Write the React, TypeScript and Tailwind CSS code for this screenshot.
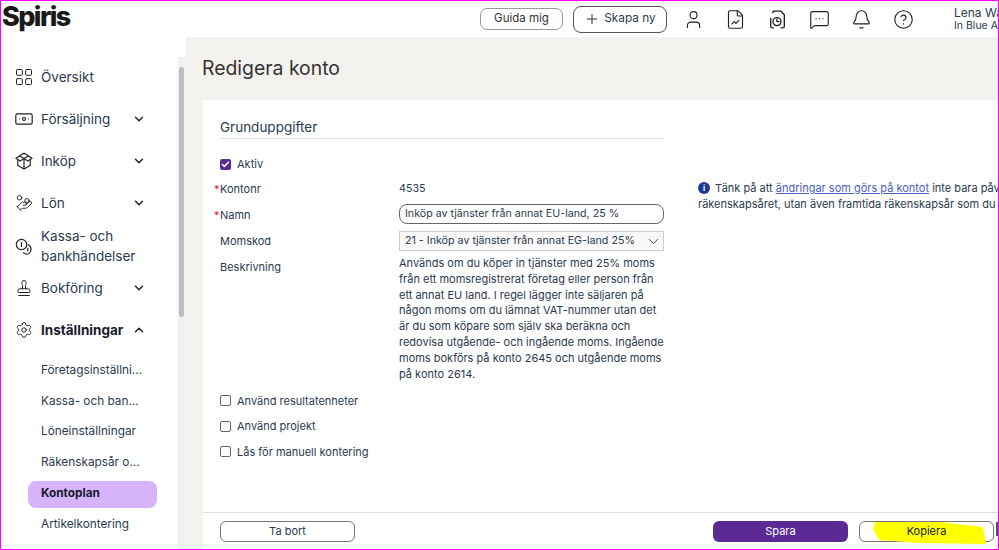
import { Bell, ChevronDown, ChevronUp, CircleHelp, FileChartLine, HandCoins, LayoutGrid, MessageSquareMore, Plus, Settings, Stamp, User, Check } from 'lucide-react';
import type { ReactNode } from 'react';

function ClockFile() {
  return (
    <svg width="21" height="21" viewBox="0 0 20 20" fill="none" stroke="#222" strokeWidth="1.3" strokeLinecap="round" strokeLinejoin="round">
      <path d="M7 2h6l3.5 3.5v11a1.5 1.5 0 0 1-1.5 1.5h-1.5" />
      <path d="M7 2A1.5 1.5 0 0 0 5.5 3.5M3.5 9v7.5A1.5 1.5 0 0 0 5 18h1" />
      <circle cx="9.5" cy="12" r="3.8" />
      <path d="M9.5 9.8V12h2" />
    </svg>
  );
}

function Banknote() {
  return (
    <svg width="18" height="18" viewBox="0 0 18 18" fill="none" stroke="#222" strokeWidth="1.2" strokeLinecap="round">
      <rect x="0.8" y="3.8" width="16.4" height="10.4" rx="1.6" />
      <circle cx="9" cy="9" r="1.5" />
      <path d="M4.5 9h.01M13.5 9h.01" />
    </svg>
  );
}

function OpenBox() {
  return (
    <svg width="18" height="18" viewBox="0 0 18 18" fill="none" stroke="#222" strokeWidth="1.2" strokeLinecap="round" strokeLinejoin="round">
      <path d="M9 6.5 4.5 4 8.5 1.3 9 1.8l.5-.5 4 2.7L9 6.5Z" />
      <path d="M4.5 4 1 6.3l4.2 2.6L9 6.5l3.8 2.4L17 6.3 13.5 4" />
      <path d="M2.8 7.5v6L9 17l6.2-3.5v-6" />
      <path d="M9 6.5V17" />
    </svg>
  );
}

function Coins() {
  return (
    <svg width="18" height="18" viewBox="0 0 18 18" fill="none" stroke="#222" strokeWidth="1.2" strokeLinecap="round">
      <circle cx="6.5" cy="7.5" r="5.2" />
      <path d="M6.5 5.5v4" />
      <path d="M13 7.8a5 5 0 0 1 .5 9 5 5 0 0 1-5-1" />
      <path d="M12.8 11v3" />
    </svg>
  );
}

function NavItem({ icon, label, bold, open }: { icon: ReactNode; label: ReactNode; bold?: boolean; open?: boolean | null }) {
  return (
    <div className="flex items-center h-[42px]">
      <div className="w-[26px] flex justify-start shrink-0">{icon}</div>
      <div className={`w-[91px] text-[13.5px] leading-[20px] ${bold ? 'font-bold text-[#1a1a2e]' : 'text-[#2c3a4d]'}`}>{label}</div>
      {open === false && <ChevronDown size={14} strokeWidth={2.5} color="#222" />}
      {open === true && <ChevronUp size={14} strokeWidth={2.5} color="#222" />}
    </div>
  );
}

function SubItem({ label, active }: { label: string; active?: boolean }) {
  return (
    <div className={`h-[27px] mb-[3.9px] w-[129px] px-[13px] flex items-center text-[11.8px] whitespace-nowrap rounded-lg ${active ? 'bg-[#d6b4fc] font-bold text-[#1a1a2e]' : 'text-[#2c3a4d]'}`}>
      {label}
    </div>
  );
}

function Row({ label, required, children, h }: { label: string; required?: boolean; children: ReactNode; h: string }) {
  return (
    <div className={`flex items-start ${h}`}>
      <div className="w-[179px] relative text-[11px] leading-[16px] text-[#2c3a4d]">
        {required && <span className="absolute -left-[6px] text-[#d0213b]">*</span>}
        {label}
      </div>
      <div className="flex-1 text-[10.7px] leading-[16px] text-[#2c3a4d]">{children}</div>
    </div>
  );
}

function Box({ label }: { label: string }) {
  return (
    <div className="flex items-center h-[25.5px] gap-[6px] text-[11px] text-[#2c3a4d]">
      <span className="w-[11px] h-[11px] rounded-[2px] border border-[#666] bg-white" />
      {label}
    </div>
  );
}

export default function App() {
  return (
    <div className="w-[999px] h-[550px] overflow-hidden border border-[#f0f] bg-white flex flex-col font-['Inter',sans-serif] text-[#2c3a4d]">
      <header className="h-[36px] shrink-0 flex items-center pl-[1px] overflow-hidden">
        <span className="w-[478px] shrink-0 text-[27px] font-extrabold tracking-[-1.6px] text-[#1a1a1a] leading-none -mt-[5px]">Spiris</span>
        <div className="flex items-center shrink-0">
          <button className="w-[83px] h-[22px] rounded-[7px] border border-[#999] text-[11.5px] text-[#333]">Guida mig</button>
          <button className="ml-[10px] w-[94px] h-[27px] rounded-lg border border-[#555] text-[11.8px] text-[#2c3a4d] flex items-center justify-center gap-[4px]"><Plus size={16} strokeWidth={1.5} color="#333" />Skapa ny</button>
          <div className="ml-[16px] flex items-center gap-[21px]">
            <User size={21} strokeWidth={1.3} color="#222" />
            <FileChartLine size={21} strokeWidth={1.3} color="#222" />
            <ClockFile />
            <MessageSquareMore size={21} strokeWidth={1.3} color="#222" />
            <Bell size={21} strokeWidth={1.3} color="#222" />
            <CircleHelp size={21} strokeWidth={1.3} color="#222" />
          </div>
          <div className="ml-[40px] whitespace-nowrap">
            <div className="text-[12px] leading-[14px]">Lena Wallin</div>
            <div className="text-[10.5px] leading-[12px]">In Blue AB</div>
          </div>
        </div>
      </header>
      <div className="flex flex-1 min-h-0">
        <aside className="w-[177px] shrink-0 pl-[14px] pt-[19px]">
          <NavItem icon={<LayoutGrid size={20} strokeWidth={1.2} color="#222" className="-ml-[1px]" />} label="Översikt" />
          <NavItem icon={<Banknote />} label="Försäljning" open={false} />
          <NavItem icon={<OpenBox />} label="Inköp" open={false} />
          <NavItem icon={<HandCoins size={18} strokeWidth={1.3} color="#222" />} label="Lön" open={false} />
          <div className="flex items-center h-[44px]">
            <div className="w-[26px] shrink-0"><Coins /></div>
            <div className="text-[13.5px] leading-[20px] text-[#2c3a4d]">Kassa- och<br />bankhändelser</div>
          </div>
          <div className="-mt-[1px]"><NavItem icon={<Stamp size={18} strokeWidth={1.3} color="#222" />} label="Bokföring" open={false} /></div>
          <NavItem icon={<Settings size={18} strokeWidth={1.3} color="#222" />} label="Inställningar" bold open={true} />
          <div className="ml-[13px] mt-[6px]">
            <SubItem label="Företagsinställni..." />
            <SubItem label="Kassa- och ban..." />
            <SubItem label="Löneinställningar" />
            <SubItem label="Räkenskapsår o..." />
            <SubItem label="Kontoplan" active />
            <SubItem label="Artikelkontering" />
          </div>
        </aside>
        <div className="w-[8px] shrink-0 bg-[#f1f1f1] relative mt-[20px]">
          <div className="absolute left-[1px] top-[10px] w-[5px] h-[250px] rounded-full bg-[#b9c0c6]" />
        </div>
        <main className="flex-1 min-w-0 bg-[#f3f2ef] flex flex-col pl-[17px]">
          <h1 className="h-[63px] flex items-center text-[19.4px] text-[#333] shrink-0 -ml-[1px]">Redigera konto</h1>
          <div className="flex-1 min-h-0 bg-white flex flex-col overflow-hidden">
            <div className="flex-1 min-h-0 flex pl-[17px] pt-[18px]">
              <div className="w-[444px] shrink-0">
                <div className="h-[21px] border-b border-[#ddd] text-[13.5px] text-[#2c3a4d] leading-[18px]">Grunduppgifter</div>
                <div className="flex items-center h-[24px] mt-[13px] gap-[6px] text-[11px]">
                  <span className="w-[11px] h-[11px] rounded-[2px] bg-[#5b2a94] flex items-center justify-center"><Check size={9} strokeWidth={4} color="white" /></span>
                  Aktiv
                </div>
                <Row label="Kontonr" required h="h-[29px] pt-[5px]">4535</Row>
                <Row label="Namn" required h="h-[28px] pt-[2px]">
                  <div className="h-[20px] -mt-[3px] rounded-lg border border-[#666] px-[5px] flex items-center whitespace-nowrap">Inköp av tjänster från annat EU-land, 25 %</div>
                </Row>
                <Row label="Momskod" h="h-[26px]">
                  <div className="h-[20px] -mt-[2px] border border-[#ccc] bg-[#f8f8f8] px-[5px] flex items-center justify-between whitespace-nowrap">21 - Inköp av tjänster från annat EG-land 25%<ChevronDown size={17} strokeWidth={1.3} color="#333" className="-mr-[4px]" /></div>
                </Row>
                <Row label="Beskrivning" h="h-[129px]">
                  <div className="-mt-[3px] text-[11px] leading-[15.8px] w-[265px]">Används om du köper in tjänster med 25% moms från ett momsregistrerat företag eller person från ett annat EU land. I regel lägger inte säljaren på någon moms om du lämnat VAT-nummer utan det är du som köpare som själv ska beräkna och redovisa utgående- och ingående moms. Ingående moms bokförs på konto 2645 och utgående moms på konto 2614.</div>
                </Row>
                <Box label="Använd resultatenheter" />
                <Box label="Använd projekt" />
                <Box label="Lås för manuell kontering" />
              </div>
              <div className="ml-[34px] mt-[62px] whitespace-nowrap overflow-hidden text-[11px] leading-[16px] flex-1 min-w-0">
                <div className="flex items-center gap-[5px]">
                  <span className="w-[12px] h-[12px] shrink-0 rounded-full bg-[#1f3a93] text-white text-[8px] font-bold flex items-center justify-center">i</span>
                  <span>Tänk på att <span className="text-[#4a5fc1] underline">ändringar som görs på kontot</span> inte bara påverkar det aktuella</span>
                </div>
                <div>räkenskapsåret, utan även framtida räkenskapsår som du skapar</div>
              </div>
            </div>
            <footer className="h-[37px] shrink-0 border-t border-[#ddd] flex items-center pl-[17px] relative">
              <button className="w-[135px] h-[21px] rounded-md border border-[#777] text-[11px]">Ta bort</button>
              <button className="ml-[358px] w-[135px] h-[21px] rounded-md bg-[#5b2a94] text-white text-[11px]">Spara</button>
              <button className="ml-[11px] w-[135px] h-[21px] rounded-md border border-[#777] text-[11px] text-[#222] relative">
                <svg className="absolute -left-[1px] -top-[1px]" width="135" height="24" viewBox="0 0 135 24" fill="none">
                  <path d="M16 1 L80 1 L124 6 L127 23 L60 22 L20 19 L14 8 Z" fill="#ffff00" />
                </svg>
                <span className="relative">Kopiera</span>
              </button>
              <span className="ml-[2px] w-[2px] h-[14px] bg-[#555] -mt-[5px]" />
            </footer>
          </div>
        </main>
      </div>
    </div>
  );
}
